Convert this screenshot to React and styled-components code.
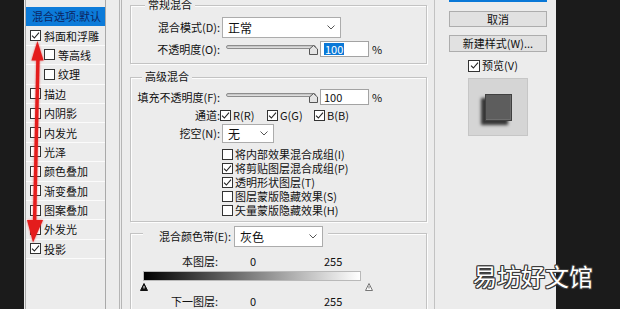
import React from 'react'
import styled, { createGlobalStyle } from 'styled-components'

const GlobalStyle = createGlobalStyle`
  html, body {
    margin: 0;
    padding: 0;
    background: #1b1b1b;
  }
  body {
    font-family: "Noto Sans CJK SC", "Noto Sans", sans-serif;
  }
`

const Screen = styled.div`
  position: relative;
  width: 620px;
  height: 309px;
  overflow: hidden;
  display: flex;
  background: #1b1b1b;
  font-size: 11px;
  line-height: 13px;
  color: #111;
`

const Dialog = styled.div`
  margin-left: 24px;
  width: 532px;
  background: #ececec;
  display: flex;
  align-items: stretch;
`

/* ---------- style list ---------- */

const StyleList = styled.div`
  margin-left: 1px;
  width: 81px;
  box-sizing: border-box;
  border-left: 1px solid #a9a9a9;
  border-right: 1px solid #a9a9a9;
  display: flex;
  flex-direction: column;
`

const ListTop = styled.div`
  height: 7px;
  flex: none;
`

const ListRow = styled.div`
  height: 19.4px;
  flex: none;
  box-sizing: border-box;
  border-bottom: 1px solid ${p => (p.$selected ? '#0c7bd9' : '#fbfbfb')};
  display: flex;
  align-items: center;
  gap: 3px;
  padding-left: ${p => p.$pad}px;
  background: ${p => (p.$selected ? '#0c7bd9' : 'transparent')};
  color: ${p => (p.$selected ? '#0b2461' : '#111')};
  line-height: 12px;
  white-space: nowrap;
  overflow: hidden;
`

/* ---------- main panel ---------- */

const MainPanel = styled.div`
  margin-left: 13px;
  width: 316px;
  box-sizing: border-box;
  border-left: 3px double #b5b5b5;
  border-right: 1px solid #c2c2c2;
  padding: 0 7px 0 8px;
  display: flex;
  flex-direction: column;
`

const GroupBox = styled.div`
  margin-top: ${p => p.$gap}px;
  padding-bottom: ${p => p.$bottom}px;
  border: 1px solid #c3c3c3;
  ${p => p.$open && 'border-bottom: none; flex: 1;'}
  box-shadow: inset 1px 1px 0 #fdfdfd, 1px 1px 0 #fdfdfd;
  display: flex;
  flex-direction: column;
`

const Legend = styled.div`
  align-self: flex-start;
  height: ${p => p.$h}px;
  margin: ${p => p.$top}px 0 0 ${p => p.$left}px;
  padding: 0 ${p => p.$padR}px 0 ${p => p.$padL}px;
  background: #ececec;
  display: flex;
  align-items: center;
  gap: 3px;
  white-space: nowrap;
`

const Row = styled.div`
  display: flex;
  align-items: center;
  flex: none;
  height: ${p => p.$h}px;
  margin-top: ${p => p.$mt}px;
  white-space: nowrap;
`

const FieldLabel = styled.span`
  width: ${p => p.$w}px;
  flex: none;
  text-align: right;
`

const SelectBox = styled.div`
  width: ${p => p.$w}px;
  height: ${p => p.$h}px;
  margin-left: ${p => p.$ml}px;
  flex: none;
  box-sizing: border-box;
  border: 1px solid #acacac;
  background: #fff;
  display: flex;
  align-items: center;
  justify-content: space-between;
  padding: 0 5px;
  font-size: 12px;
`

const SliderTrack = styled.div`
  position: relative;
  width: 90px;
  height: 4px;
  margin: 0 0 4px 6px;
  flex: none;
  box-sizing: border-box;
  border: 1px solid #8d8d8d;
  border-radius: 2px;
  background: linear-gradient(#bdbdbd, #e6e6e6);
`

const SliderThumb = styled.svg`
  position: absolute;
  right: -3px;
  top: -1px;
`

const NumberInput = styled.div`
  width: 49px;
  height: 16px;
  margin-left: 4px;
  flex: none;
  box-sizing: border-box;
  border: 1px solid #a3a3a3;
  background: #fff;
  display: flex;
  align-items: center;
  padding-left: 3px;
`

const Selected = styled.span`
  background: #0a78d7;
  color: #fff;
  padding: 0 1px;
  line-height: 12px;
`

const Unit = styled.span`
  margin-left: 3px;
`

const ChannelItem = styled.span`
  width: 47px;
  flex: none;
  display: flex;
  align-items: center;
  gap: 2px;
  &:first-of-type {
    margin-left: 2px;
  }
`

const CheckList = styled.div`
  margin-top: 4px;
  padding-left: 91px;
  display: flex;
  flex-direction: column;
`

const CheckRow = styled.div`
  height: 14px;
  display: flex;
  align-items: center;
  gap: 2px;
  line-height: 12px;
  white-space: nowrap;
`

const Value = styled.span`
  width: ${p => p.$w}px;
  margin-left: ${p => p.$ml}px;
  flex: none;
`

const GradientBar = styled.div`
  width: 218px;
  height: 10px;
  margin: 3px 0 0 12px;
  flex: none;
  box-sizing: border-box;
  border: 1px solid #b9b9b9;
  background: linear-gradient(to right, #000, #fff);
`

const MarkerRow = styled.div`
  width: 233px;
  height: 8px;
  margin: 2px 0 0 9px;
  display: flex;
  justify-content: space-between;
`

/* ---------- side column ---------- */

const SideColumn = styled.div`
  width: 121px;
  box-sizing: border-box;
  padding: 0 9px 0 14px;
  display: flex;
  flex-direction: column;
`

const Button = styled.div`
  height: ${p => p.$h}px;
  margin-top: ${p => p.$mt}px;
  box-sizing: border-box;
  border: ${p => (p.$primary ? '2px solid #0a78d7' : '1px solid #adadad')};
  background: #e1e1e1;
  display: flex;
  align-items: center;
  justify-content: center;
  white-space: nowrap;
`

const PreviewCheck = styled.div`
  margin-top: 7px;
  height: 13px;
  display: flex;
  align-items: center;
  justify-content: center;
  gap: 2px;
  padding-right: 10px;
`

const PreviewBox = styled.div`
  align-self: center;
  margin-top: 6px;
  width: 60px;
  height: 58px;
  box-sizing: border-box;
  border: 1px solid #c6c6c6;
  background: #d5d5d5;
  display: flex;
  align-items: center;
  justify-content: center;
`

const PreviewSquare = styled.div`
  width: 27px;
  height: 27px;
  box-sizing: border-box;
  border: 1px solid #404040;
  background: #5d5d5d;
  box-shadow: -4px 4px 3px rgba(0, 0, 0, 0.75), inset -1px -1px 0 #6e6e6e;
`

/* ---------- overlays ---------- */

const Watermark = styled.div`
  position: absolute;
  left: 473px;
  top: 261px;
  font-size: 24px;
  line-height: 30px;
  color: #fff;
  text-shadow:
    1px 0 0 #3a3a3a, -1px 0 0 #3a3a3a, 0 1px 0 #3a3a3a, 0 -1px 0 #3a3a3a,
    1px 1px 0 #3a3a3a, -1px -1px 0 #3a3a3a, 1px -1px 0 #3a3a3a, -1px 1px 0 #3a3a3a;
  white-space: nowrap;
`

const ArrowLayer = styled.svg`
  position: absolute;
  left: 0;
  top: 0;
  pointer-events: none;
  filter: drop-shadow(0 0 1px rgba(230, 30, 30, 0.6));
`

const CheckFrame = styled.span`
  width: ${p => p.$size}px;
  height: ${p => p.$size}px;
  flex: none;
  box-sizing: border-box;
  border: 1px solid #333;
  background: #fff;
  display: inline-flex;
  align-items: center;
  justify-content: center;
`

function CheckBox({ checked, size = 11 }) {
  return (
    <CheckFrame $size={size}>
      {checked && (
        <svg width="9" height="9" viewBox="0 0 9 9">
          <path d="M1 4.6 L3.4 7 L8 1.6" fill="none" stroke="#222" strokeWidth="1.1" />
        </svg>
      )}
    </CheckFrame>
  )
}

function Chevron() {
  return (
    <svg width="8" height="5" viewBox="0 0 8 5">
      <path d="M0.5 0.5 L4 4 L7.5 0.5" fill="none" stroke="#555" strokeWidth="1" />
    </svg>
  )
}

function Slider() {
  return (
    <SliderTrack>
      <SliderThumb width="9" height="10" viewBox="0 0 9 10">
        <path d="M4.5 0.5 L8.5 4 L8.5 9.5 L0.5 9.5 L0.5 4 Z" fill="#e4e4e4" stroke="#555" />
      </SliderThumb>
    </SliderTrack>
  )
}

function Marker({ dark }) {
  return (
    <svg width="8" height="8" viewBox="0 0 8 8">
      <path
        d="M4 0.5 L7.5 7.5 L0.5 7.5 Z"
        fill={dark ? '#111' : '#fafafa'}
        stroke={dark ? '#111' : '#777'}
      />
      <path d="M4 3 L4 5.5" stroke={dark ? '#fff' : '#777'} strokeWidth="1" />
    </svg>
  )
}

const styleItems = [
  { label: '混合选项:默认', selected: true },
  { label: '斜面和浮雕', checked: true },
  { label: '等高线', sub: true },
  { label: '纹理', sub: true },
  { label: '描边' },
  { label: '内阴影' },
  { label: '内发光' },
  { label: '光泽' },
  { label: '颜色叠加' },
  { label: '渐变叠加' },
  { label: '图案叠加' },
  { label: '外发光' },
  { label: '投影', checked: true },
]

const knockoutOptions = [
  { label: '将内部效果混合成组(I)', checked: false },
  { label: '将剪贴图层混合成组(P)', checked: true },
  { label: '透明形状图层(T)', checked: true },
  { label: '图层蒙版隐藏效果(S)', checked: false },
  { label: '矢量蒙版隐藏效果(H)', checked: false },
]

export default function App() {
  return (
    <Screen>
      <GlobalStyle />
      <Dialog>
        <StyleList>
          <ListTop />
          {styleItems.map(item =>
            <ListRow
              key={item.label}
              $selected={item.selected}
              $pad={item.selected ? 6 : item.sub ? 18 : 4}
            >
              {!item.selected && <CheckBox checked={item.checked} />}
              {item.label}
            </ListRow>
          )}
        </StyleList>

        <MainPanel>
          <GroupBox $gap={5} $bottom={6}>
            <Legend $h={14} $top={-9} $left={14} $padL={3} $padR={3}>常规混合</Legend>
            <Row $h={21} $mt={6}>
              <FieldLabel $w={89}>混合模式(D):</FieldLabel>
              <SelectBox $w={119} $h={21} $ml={2}>正常<Chevron /></SelectBox>
            </Row>
            <Row $h={16} $mt={3}>
              <FieldLabel $w={89}>不透明度(O):</FieldLabel>
              <Slider />
              <NumberInput><Selected>100</Selected></NumberInput>
              <Unit>%</Unit>
            </Row>
          </GroupBox>

          <GroupBox $gap={13} $bottom={4}>
            <Legend $h={14} $top={-9} $left={11} $padL={3} $padR={3}>高级混合</Legend>
            <Row $h={16} $mt={6}>
              <FieldLabel $w={89}>填充不透明度(F):</FieldLabel>
              <Slider />
              <NumberInput>100</NumberInput>
              <Unit>%</Unit>
            </Row>
            <Row $h={14} $mt={3}>
              <FieldLabel $w={89}>通道:</FieldLabel>
              <ChannelItem><CheckBox checked />R(R)</ChannelItem>
              <ChannelItem><CheckBox checked />G(G)</ChannelItem>
              <ChannelItem><CheckBox checked />B(B)</ChannelItem>
            </Row>
            <Row $h={19} $mt={2}>
              <FieldLabel $w={89}>挖空(N):</FieldLabel>
              <SelectBox $w={52} $h={19} $ml={2}>无<Chevron /></SelectBox>
            </Row>
            <CheckList>
              {knockoutOptions.map(opt =>
                <CheckRow key={opt.label}>
                  <CheckBox checked={opt.checked} />
                  {opt.label}
                </CheckRow>
              )}
            </CheckList>
          </GroupBox>

          <GroupBox $gap={11} $bottom={0} $open>
            <Legend $h={21} $top={-8} $left={12} $padL={0} $padR={5}>
              <FieldLabel $w={88}>混合颜色带(E):</FieldLabel>
              <SelectBox $w={89} $h={21} $ml={0}>灰色<Chevron /></SelectBox>
            </Legend>
            <Row $h={14} $mt={7}>
              <FieldLabel $w={87}>本图层:</FieldLabel>
              <Value $ml={32} $w={74}>0</Value>
              <Value $ml={0} $w={30}>255</Value>
            </Row>
            <GradientBar />
            <MarkerRow>
              <Marker dark />
              <Marker />
            </MarkerRow>
            <Row $h={14} $mt={3}>
              <FieldLabel $w={87}>下一图层:</FieldLabel>
              <Value $ml={32} $w={74}>0</Value>
              <Value $ml={0} $w={30}>255</Value>
            </Row>
          </GroupBox>
        </MainPanel>

        <SideColumn>
          <Button $primary $h={17} $mt={-15}>确定</Button>
          <Button $h={16} $mt={9}>取消</Button>
          <Button $h={17} $mt={8}>新建样式(W)...</Button>
          <PreviewCheck>
            <CheckBox checked size={12} />
            预览(V)
          </PreviewCheck>
          <PreviewBox>
            <PreviewSquare />
          </PreviewBox>
        </SideColumn>
      </Dialog>

      <ArrowLayer width="60" height="309" viewBox="0 0 60 309">
        <line x1="38" y1="56" x2="34.5" y2="226" stroke="#e41c1c" strokeWidth="3.4" />
        <path d="M37.4 41 L43.6 60.5 L31.4 60.5 Z" fill="#e41c1c" />
        <path d="M33 242.5 L27 220 L43 220 Z" fill="#e41c1c" />
      </ArrowLayer>

      <Watermark>易坊好文馆</Watermark>
    </Screen>
  )
}
